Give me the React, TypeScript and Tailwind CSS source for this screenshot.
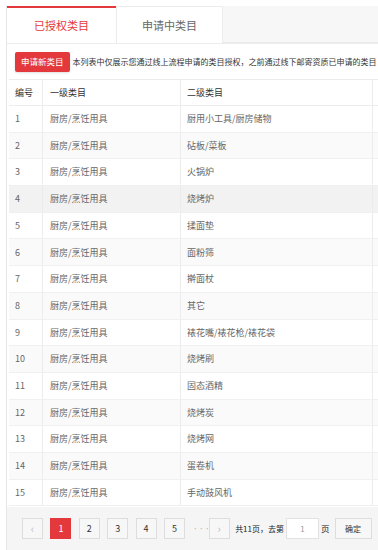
import React from "react";

const rows = [
  "厨用小工具/厨房储物",
  "砧板/菜板",
  "火锅炉",
  "烧烤炉",
  "揉面垫",
  "面粉筛",
  "擀面杖",
  "其它",
  "裱花嘴/裱花枪/裱花袋",
  "烧烤刷",
  "固态酒精",
  "烧烤炭",
  "烧烤网",
  "蛋卷机",
  "手动鼓风机",
];

const PageBtn = ({ children, active }: { children: React.ReactNode; active?: boolean }) => (
  <div
    className={
      active
        ? "w-[21px] h-[21px] shrink-0 flex items-center justify-center text-[9px] bg-[#e4393c] text-white border border-[#e4393c]"
        : "w-[21px] h-[21px] shrink-0 flex items-center justify-center text-[9px] bg-[#f7f7f7] text-[#333] border border-[#ddd]"
    }
  >
    {children}
  </div>
);

export default function App() {
  return (
    <div className="w-[378px] h-[550px] bg-white overflow-hidden font-['Noto_Sans_CJK_SC','Noto_Sans',sans-serif]">
      <div className="ml-[6px] mt-[6px] h-[544px] border-l border-[#e6e6e6] flex flex-col">
        {/* tabs */}
        <div className="flex h-[37px] shrink-0 bg-[#f7f7f7]">
          <div className="w-[109px] bg-white border-t-2 border-[#e4393c] flex items-center justify-center text-[11px] text-[#e4393c]">
            已授权类目
          </div>
          <div className="w-[107px] bg-white border-t border-l border-r border-[#ececec] flex items-center justify-center text-[11px] text-[#666]">
            申请中类目
          </div>
          <div className="flex-1 border-b border-[#ececec]" />
        </div>

        {/* toolbar */}
        <div className="flex items-center h-[36px] shrink-0 pl-[8px] border-t border-[#ececec] whitespace-nowrap overflow-hidden">
          <div className="h-[20px] px-[6px] flex items-center bg-[#e4393c] text-white text-[8.5px] rounded-[2px] shadow-sm shrink-0">
            申请新类目
          </div>
          <span className="ml-[3px] text-[8px] text-[#333]">
            本列表中仅展示您通过线上流程申请的类目授权，之前通过线下邮寄资质已申请的类目
          </span>
        </div>

        {/* table */}
        <div className="flex-1 overflow-hidden pl-[2px]">
          <div className="border-t border-[#ececec]">
            <div className="flex h-[26px] text-[9px] text-[#333] border-b border-[#ececec]">
              <div className="w-[34px] pl-[6px] flex items-center border-r border-[#ececec]">编号</div>
              <div className="w-[138px] pl-[7px] flex items-center border-r border-[#ececec]">一级类目</div>
              <div className="w-[192px] pl-[6px] flex items-center border-r border-[#ececec]">二级类目</div>
              <div className="flex-1" />
            </div>
            {rows.map((name, i) => (
              <div
                key={i}
                className={
                  "flex h-[26.7px] text-[9px] text-[#666] border-b border-[#f0f0f0] " +
                  (i === 3 ? "bg-[#f2f2f2]" : i % 2 === 1 ? "bg-[#fafafa]" : "bg-white")
                }
              >
                <div className="w-[34px] pl-[6px] flex items-center border-r border-[#ececec]">{i + 1}</div>
                <div className="w-[138px] pl-[7px] flex items-center border-r border-[#ececec]">厨房/烹饪用具</div>
                <div className="w-[192px] pl-[6px] flex items-center border-r border-[#ececec]">{name}</div>
                <div className="flex-1" />
              </div>
            ))}
          </div>
        </div>

        {/* pagination */}
        <div className="h-[43px] shrink-0 bg-[#f5f5f5] flex items-center pl-[15px] gap-[7.4px] text-[9px] whitespace-nowrap">
          <PageBtn>
            <span className="text-[#bbb] text-[11px]">‹</span>
          </PageBtn>
          <PageBtn active>1</PageBtn>
          <PageBtn>2</PageBtn>
          <PageBtn>3</PageBtn>
          <PageBtn>4</PageBtn>
          <PageBtn>5</PageBtn>
          <span className="w-[9px] text-center text-[#bbb] text-[6px]">···</span>
          <PageBtn>
            <span className="text-[#bbb] text-[11px]">›</span>
          </PageBtn>
          <div className="flex items-center text-[#222] -ml-[2px] shrink-0">
            <span className="text-[8px]">共11页，去第</span>
            <div className="ml-[2px] w-[33px] h-[21px] bg-white border border-[#e2e2e2] flex items-center justify-center text-[#999] text-[8px]">
              1
            </div>
            <span className="ml-[2px] text-[8.5px]">页</span>
            <div className="ml-[5px] w-[37px] h-[21px] border border-[#ddd] bg-[#f7f7f7] flex items-center justify-center text-[8px] text-[#333]">
              确定
            </div>
          </div>
        </div>
      </div>
    </div>
  );
}
